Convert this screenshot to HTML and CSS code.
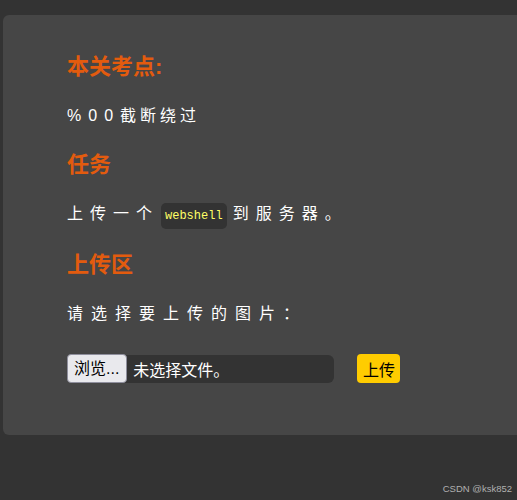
FILE: index.html
```html
<!DOCTYPE html>
<html lang="zh-CN">
<head>
    <meta charset="UTF-8">
    <title>Upload</title>
    <link rel="stylesheet" href="styles.css">
</head>
<body>
    <div class="card">
        <h3 class="title">本关考点:</h3>
        <p class="text text-tight"><span class="num">%00</span>截断绕过</p>

        <h3 class="title">任务</h3>
        <p class="text">上传一个<code class="code">webshell</code>到服务器。</p>

        <h3 class="title">上传区</h3>
        <p class="text text-wide">请选择要上传的图片：</p>

        <form class="upload-form">
            <div class="file-box">
                <span class="file-btn">浏览...</span>
                <span class="file-name">未选择文件。</span>
            </div>
            <button type="button" class="upload-button">上传</button>
        </form>
    </div>

    <div class="watermark">CSDN @ksk852</div>
</body>
</html>
```

FILE: styles.css
```css
body {
    margin: 0;
    padding: 0;
    background-color: #333;
    font-family: "Liberation Sans", "Noto Sans CJK SC", sans-serif;
    color: #fff;
    height: 500px;
    overflow: hidden;
    position: relative;
}

.card {
    margin: 15px 0 0 3px;
    padding: 37px 64px 0;
    height: 383px;
    background-color: #464646;
    border-radius: 6px 0 0 6px;
}

.title {
    margin: 0 0 22px;
    font-size: 22px;
    line-height: 30px;
    font-weight: bold;
    color: #e35b0e;
}

.text {
    margin: 0 0 22px;
    font-size: 16px;
    line-height: 24px;
    letter-spacing: 7px;
}

.text-tight {
    letter-spacing: 4px;
}

.text-tight .num {
    letter-spacing: 7px;
}

.text-wide {
    letter-spacing: 8px;
}

.code {
    font-family: "Liberation Mono", monospace;
    font-size: 12px;
    letter-spacing: 0;
    color: #ffff66;
    background-color: #333;
    border-radius: 5px;
    padding: 6px 4px;
    margin: 0 6px 0 2px;
}

.upload-form {
    display: flex;
    align-items: center;
    gap: 23px;
    margin-top: 28px;
}

.file-box {
    display: flex;
    align-items: center;
    width: 267px;
    height: 28px;
    background-color: #333;
    border-radius: 6px;
}

.file-btn {
    box-sizing: border-box;
    height: 29px;
    line-height: 27px;
    padding: 0 7px 0 6px;
    background-color: #e9e9ed;
    border: 1px solid #8f8f9d;
    border-radius: 4px;
    color: #000;
    font-size: 16px;
}

.file-name {
    margin-left: 6px;
    font-size: 16px;
    color: #fff;
}

.upload-button {
    height: 29px;
    padding: 0 5px 0 6px;
    background-color: #ffcc00;
    color: #000;
    border: none;
    border-radius: 4px;
    font-family: "Liberation Sans", "Noto Sans CJK SC", sans-serif;
    font-size: 16px;
}

.watermark {
    position: absolute;
    right: 5px;
    bottom: 6px;
    font-size: 9.5px;
    color: #b0b0b0;
}
```
